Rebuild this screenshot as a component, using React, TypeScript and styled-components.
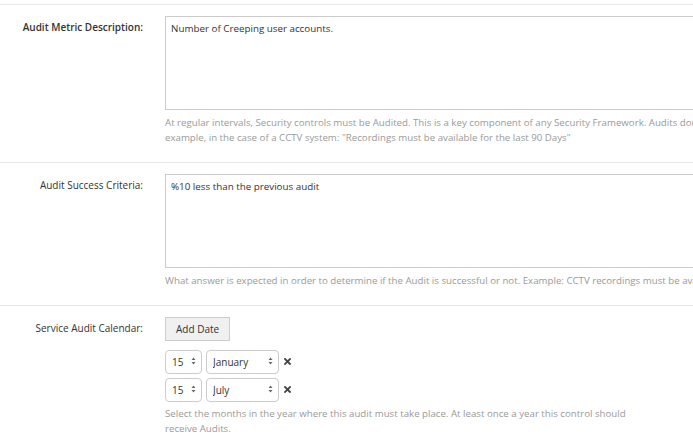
import React from "react";
import styled, { createGlobalStyle } from "styled-components";

const GlobalStyle = createGlobalStyle`
  html, body {
    margin: 0;
    padding: 0;
    background: #ffffff;
    overflow: hidden;
  }
  body {
    font-family: "Open Sans", "Liberation Sans", sans-serif;
    color: #333333;
  }
`;

const Page = styled.div`
  padding-top: 4px;
  width: 900px;
`;

const Row = styled.div`
  display: grid;
  grid-template-columns: 143px 700px;
  column-gap: 22px;
  border-top: 1px solid #e8e8e8;
  padding: 11px 0 17px;
`;

const Label = styled.label<{ $strong?: boolean }>`
  text-align: right;
  font-size: 10px;
  line-height: 15px;
  padding-top: 4px;
  color: #333333;
  font-weight: ${(p) => (p.$strong ? 600 : 400)};
`;

const Control = styled.div`
  display: flex;
  flex-direction: column;
  align-items: flex-start;
`;

const TextArea = styled.textarea`
  display: block;
  box-sizing: border-box;
  width: 100%;
  height: 94px;
  margin: 0;
  padding: 4px 5px;
  border: 1px solid #cccccc;
  border-radius: 0;
  resize: none;
  font-family: "Open Sans", "Liberation Sans", sans-serif;
  font-size: 9.8px;
  line-height: 15px;
  color: #333333;
  background: #ffffff;
  outline: none;
`;

const Help = styled.p`
  margin: 5px 0 0;
  font-size: 9.7px;
  line-height: 15px;
  color: #9a9a9a;
  white-space: pre;
`;

const Button = styled.button`
  box-sizing: border-box;
  height: 24px;
  padding: 0 10px;
  margin: 0;
  background: #f0f0f0;
  border: 1px solid #cccccc;
  border-radius: 0;
  font-family: "Open Sans", "Liberation Sans", sans-serif;
  font-size: 10px;
  color: #333333;
`;

const DateList = styled.div`
  display: flex;
  flex-direction: column;
  gap: 4px;
  margin-top: 8px;
`;

const DateRow = styled.div`
  display: flex;
  align-items: center;
  gap: 4px;
`;

const SelectWrap = styled.div<{ $w: number }>`
  position: relative;
  width: ${(p) => p.$w}px;
  height: 24px;
`;

const Select = styled.select`
  box-sizing: border-box;
  width: 100%;
  height: 100%;
  margin: 0;
  padding: 0 14px 0 6px;
  border: 1px solid #cccccc;
  border-radius: 4px;
  background: #ffffff;
  appearance: none;
  -webkit-appearance: none;
  font-family: "Open Sans", "Liberation Sans", sans-serif;
  font-size: 10px;
  color: #333333;
  outline: none;
`;

const Arrow = styled.svg`
  position: absolute;
  right: 6px;
  top: 8px;
  pointer-events: none;
`;

const Remove = styled.svg`
  margin-left: 1px;
`;

const Updown = () => (
  <Arrow width="5" height="8" viewBox="0 0 5 8">
    <path d="M2.5 0.5 L4.5 3 L0.5 3 Z" fill="#666" />
    <path d="M2.5 7.5 L4.5 5 L0.5 5 Z" fill="#666" />
  </Arrow>
);

const XIcon = () => (
  <Remove width="7" height="7" viewBox="0 0 7 7">
    <path d="M1 1 L6 6 M6 1 L1 6" stroke="#444" strokeWidth="1.8" strokeLinecap="square" />
  </Remove>
);

const months = [
  "January", "February", "March", "April", "May", "June",
  "July", "August", "September", "October", "November", "December",
];

const DateSelect = ({ month }: { month: string }) => (
  <DateRow>
    <SelectWrap $w={37}>
      <Select defaultValue="15">
        {Array.from({ length: 31 }, (_, i) => (
          <option key={i} value={String(i + 1)}>{i + 1}</option>
        ))}
      </Select>
      <Updown />
    </SelectWrap>
    <SelectWrap $w={73}>
      <Select defaultValue={month}>
        {months.map((m) => (
          <option key={m} value={m}>{m}</option>
        ))}
      </Select>
      <Updown />
    </SelectWrap>
    <XIcon />
  </DateRow>
);

export default function App() {
  return (
    <>
      <GlobalStyle />
      <Page>
        <Row>
          <Label $strong>Audit Metric Description:</Label>
          <Control>
            <TextArea defaultValue="Number of Creeping user accounts." />
            <Help>
              {"At regular intervals, Security controls must be Audited. This is a key component of any Security Framework. Audits don't need to be complex, for\nexample, in the case of a CCTV system: \"Recordings must be available for the last 90 Days\""}
            </Help>
          </Control>
        </Row>
        <Row>
          <Label>Audit Success Criteria:</Label>
          <Control>
            <TextArea defaultValue="%10 less than the previous audit" />
            <Help>
              {"What answer is expected in order to determine if the Audit is successful or not. Example: CCTV recordings must be available for the last 90 days."}
            </Help>
          </Control>
        </Row>
        <Row>
          <Label>Service Audit Calendar:</Label>
          <Control>
            <Button type="button">Add Date</Button>
            <DateList>
              <DateSelect month="January" />
              <DateSelect month="July" />
            </DateList>
            <Help>
              {"Select the months in the year where this audit must take place. At least once a year this control should\nreceive Audits."}
            </Help>
          </Control>
        </Row>
      </Page>
    </>
  );
}
